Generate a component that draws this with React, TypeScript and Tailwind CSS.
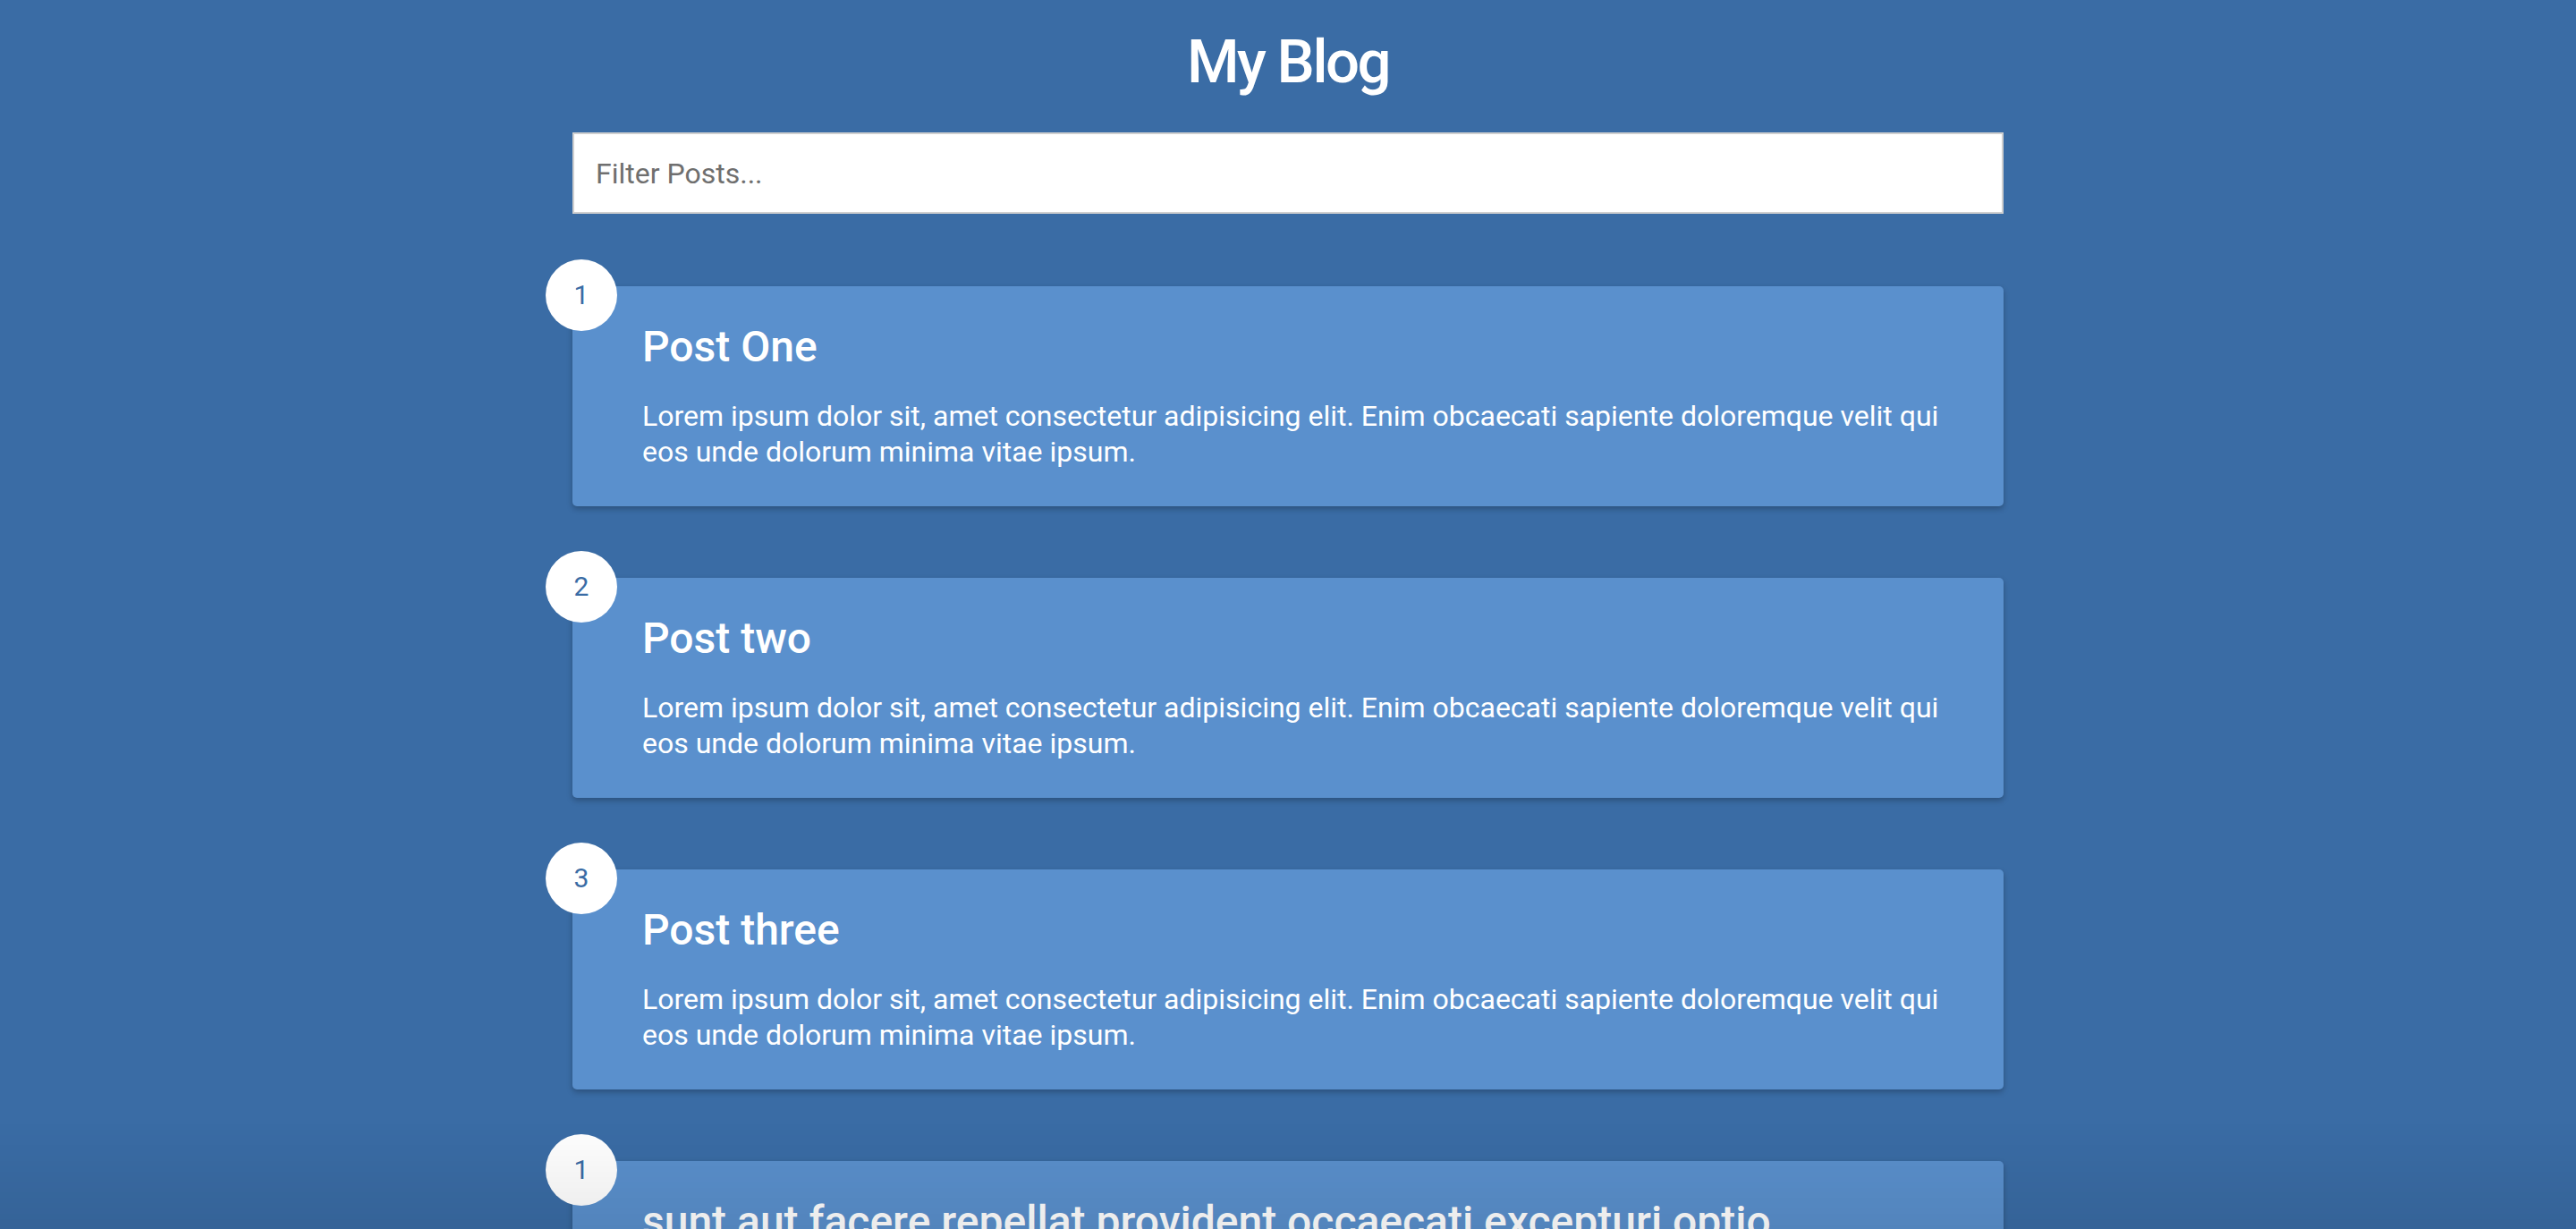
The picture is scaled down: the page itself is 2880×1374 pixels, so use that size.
import { useState } from "react";

type Post = {
  id: number;
  title: string;
  body: string;
};

const lorem =
  "Lorem ipsum dolor sit, amet consectetur adipisicing elit. Enim obcaecati sapiente doloremque velit qui eos unde dolorum minima vitae ipsum.";

const posts: Post[] = [
  { id: 1, title: "Post One", body: lorem },
  { id: 2, title: "Post two", body: lorem },
  { id: 3, title: "Post three", body: lorem },
  {
    id: 1,
    title: "sunt aut facere repellat provident occaecati excepturi optio reprehenderit",
    body: "quia et suscipit suscipit recusandae consequuntur expedita et cum reprehenderit molestiae ut ut quas totam nostrum rerum est autem sunt rem eveniet architecto",
  },
];

const PostCard = ({ post }: { post: Post }) => (
  <div className="relative rounded-[5px] bg-[#5a90cd] pt-[39px] pr-[50px] pb-[41px] pl-[78px] text-white shadow-[0_3px_6px_rgba(0,0,0,0.25)]">
    {/* number badge */}
    <div className="absolute -left-[30px] -top-[30px] flex h-20 w-20 items-center justify-center rounded-full bg-white text-[30px] leading-none text-[#3a6ca5]">
      {post.id}
    </div>
    <h2 className="text-[48px] font-medium leading-[58px]">{post.title}</h2>
    <p className="mt-[28px] text-[32px] leading-[40px]">{post.body}</p>
  </div>
);

const App = () => {
  const [filter, setFilter] = useState("");

  const visible = posts.filter((post) =>
    (post.title + " " + post.body).toLowerCase().includes(filter.toLowerCase())
  );

  return (
    <div className="relative min-h-screen overflow-hidden bg-[#3a6ca5] pt-[34px] pb-20 font-[Roboto,sans-serif]">
      <h1 className="text-center text-[67px] font-medium leading-[70px] tracking-[-2.5px] text-white">
        My Blog
      </h1>

      <div className="mx-auto mt-[44px] w-[1600px]">
        <input
          type="text"
          value={filter}
          onChange={(e) => setFilter(e.target.value)}
          placeholder="Filter Posts..."
          className="block h-[91px] w-full border-2 border-[#cfcfcf] bg-white px-[24px] text-[32px] text-[#333] outline-none placeholder:text-[#6f6f6f]"
        />

        <div className="mt-[81px] flex flex-col gap-[80px]">
          {visible.map((post, i) => (
            <PostCard key={i} post={post} />
          ))}
        </div>
      </div>

      <div className="pointer-events-none fixed inset-x-0 bottom-0 h-[120px] bg-linear-to-b from-transparent to-black/[0.08]" />
    </div>
  );
};

export default App;
